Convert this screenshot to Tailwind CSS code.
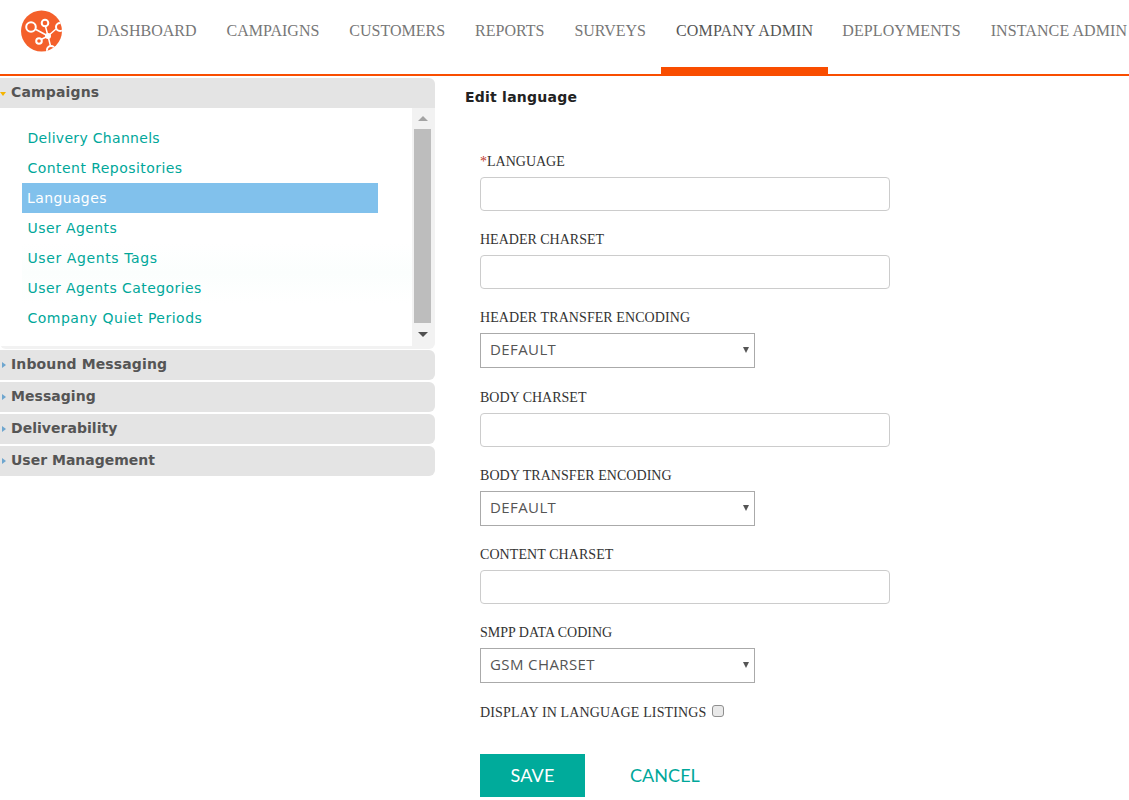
<!DOCTYPE html>
<html><head><meta charset="utf-8"><title>Edit language</title>
<script src="https://cdn.jsdelivr.net/npm/@tailwindcss/browser@4"></script></head>
<body class="bg-white overflow-hidden font-['Liberation_Serif',serif]">
<header class="h-[76px] border-b-2 border-[#f94d00] flex items-start relative">
  <svg class="absolute left-[21px] top-[10px]" width="42" height="42" viewBox="21 10 42 42">
    <defs><clipPath id="c"><circle cx="41.5" cy="31" r="20.5"/></clipPath></defs>
    <circle cx="41.5" cy="31" r="20.5" fill="#f4602b"/>
    <g clip-path="url(#c)" stroke="#fff" fill="none">
      <path d="M35 29 L48 36 M45.5 26.5 L48 36 M41 39.5 L48 36 M56 29 L48 36 M50.500 46 L48 36" stroke-width="1.500"/>
      <circle cx="31" cy="27" r="4.800" stroke-width="2"/>
      <circle cx="45" cy="23" r="3.300" stroke-width="2"/>
      <circle cx="39" cy="41" r="2.800" stroke-width="2"/>
      <circle cx="60" cy="27" r="4" stroke-width="2"/>
      <circle cx="51" cy="50" r="4" stroke-width="2"/>
      <circle cx="48" cy="36" r="3" fill="#fff" stroke="none"/>
    </g>
  </svg>
  <nav class="flex absolute left-[82px] top-0 text-[16px] leading-[20px] text-[#777] whitespace-nowrap">
    <a class="px-[15px] pt-[21px] h-[74px]">DASHBOARD</a>
    <a class="px-[15px] pt-[21px] h-[74px]">CAMPAIGNS</a>
    <a class="px-[15px] pt-[21px] h-[74px]">CUSTOMERS</a>
    <a class="px-[15px] pt-[21px] h-[74px]">REPORTS</a>
    <a class="px-[15px] pt-[21px] h-[74px]">SURVEYS</a>
    <a class="px-[15px] pt-[21px] h-[74px] tracking-[0.154px] text-[#555] border-b-[7px] border-[#f94d00]">COMPANY ADMIN</a>
    <a class="pl-[14px] pr-[15px] pt-[21px] h-[74px] tracking-[0.09px]">DEPLOYMENTS</a>
    <a class="px-[15px] pt-[21px] h-[74px] tracking-[0.1px]">INSTANCE ADMIN</a>
  </nav>
</header>
<div class="flex items-start">
  <aside class="w-[435px] shrink-0 pt-[2px] font-['DejaVu_Sans',sans-serif]">
    <div class="h-[30px] bg-[#e4e4e4] rounded-tr-[6px] flex items-center relative pl-[11px] pb-[1px] text-[14px] font-bold tracking-[0.15px] text-[#555]">
      <span class="absolute left-0 top-[14px] w-0 h-0 border-x-[3.500px] border-x-transparent border-t-[4px] border-t-[#f5b400]"></span>Campaigns
    </div>
    <div class="h-[241px] bg-[#f2f2f2] rounded-b-[6px] pb-[3px] flex">
      <div class="w-[412px] bg-white pt-[15px] pl-[22px] text-[14px] leading-[30px] text-[#00a79a]">
        <div class="pl-[5.500px] tracking-[0.3px]">Delivery Channels</div>
        <div class="pl-[5.500px] tracking-[0.45px]">Content Repositories</div>
        <div class="pl-[5px] w-[356px] bg-[#81c1ec] text-white tracking-[0.38px]">Languages</div>
        <div class="pl-[5.500px] tracking-[0.42px]">User Agents</div>
        <div class="pl-[5.500px] tracking-[0.6px] bg-gradient-to-b from-white to-[#fbfefd]">User Agents Tags</div>
        <div class="pl-[5.500px] tracking-[0.42px] bg-gradient-to-b from-[#fbfefd] to-white">User Agents Categories</div>
        <div class="pl-[5.500px] tracking-[0.5px]">Company Quiet Periods</div>
      </div>
      <div class="w-[23px] flex flex-col items-start pl-[2px]">
        <div class="h-[21px] w-[17px] flex items-center justify-center"><span class="w-0 h-0 border-x-[5px] border-x-transparent border-b-[5px] border-b-[#a3a3a3]"></span></div>
        <div class="h-[194px] w-[17px] bg-[#bdbdbd]"></div>
        <div class="h-[23px] w-[17px] flex items-center justify-center"><span class="w-0 h-0 border-x-[5px] border-x-transparent border-t-[5px] border-t-[#505050]"></span></div>
      </div>
    </div>
    <div class="flex flex-col gap-[2px] mt-[1px] text-[14px] font-bold text-[#555]">
      <div class="h-[30px] bg-[#e4e4e4] rounded-r-[6px] flex items-center relative pl-[11px] pb-[1px] tracking-[0.13px]"><span class="absolute left-[2px] top-[12px] w-0 h-0 border-y-[3.500px] border-y-transparent border-l-[4px] border-l-[#6ea6cf]"></span>Inbound Messaging</div>
      <div class="h-[30px] bg-[#e4e4e4] rounded-r-[6px] flex items-center relative pl-[11px] pb-[1px] tracking-[0.05px]"><span class="absolute left-[2px] top-[12px] w-0 h-0 border-y-[3.500px] border-y-transparent border-l-[4px] border-l-[#6ea6cf]"></span>Messaging</div>
      <div class="h-[30px] bg-[#e4e4e4] rounded-r-[6px] flex items-center relative pl-[11px] pb-[1px] tracking-[0.03px]"><span class="absolute left-[2px] top-[12px] w-0 h-0 border-y-[3.500px] border-y-transparent border-l-[4px] border-l-[#6ea6cf]"></span>Deliverability</div>
      <div class="h-[30px] bg-[#e4e4e4] rounded-r-[6px] flex items-center relative pl-[11px] pb-[1px]"><span class="absolute left-[2px] top-[12px] w-0 h-0 border-y-[3.500px] border-y-transparent border-l-[4px] border-l-[#6ea6cf]"></span>User Management</div>
    </div>
  </aside>
  <main class="flex-1 pl-[30px]">
    <h1 class="font-['DejaVu_Sans',sans-serif] font-bold text-[14px] leading-[20px] tracking-[0.23px] text-[#222] mt-[11px] mb-[47px]">Edit language</h1>
    <form class="pl-[15px] text-[14px] text-[#333]">
      <label class="block leading-[16px] mb-[7px]"><span class="text-[#c0392b]">*</span>LANGUAGE</label>
      <input class="block w-[410px] h-[34px] border border-[#ccc] rounded-[4px] mb-[21px]">
      <label class="block leading-[16px] mb-[7px]">HEADER CHARSET</label>
      <input class="block w-[410px] h-[34px] border border-[#ccc] rounded-[4px] mb-[21px]">
      <label class="block leading-[16px] mb-[7px] tracking-[0.08px]">HEADER TRANSFER ENCODING</label>
      <div class="relative w-[275px] mb-[22px]">
        <select class="appearance-none block w-full h-[35px] pb-[2px] border border-[#aaa] bg-white pl-[9px] font-['Open_Sans',sans-serif] text-[15px] tracking-[0.4px] text-[#555]"><option>DEFAULT</option></select>
        <span class="absolute right-[6px] top-[14px] w-0 h-0 border-x-[3px] border-x-transparent border-t-[6px] border-t-[#555]"></span>
      </div>
      <label class="block leading-[16px] mb-[7px]">BODY CHARSET</label>
      <input class="block w-[410px] h-[34px] border border-[#ccc] rounded-[4px] mb-[21px]">
      <label class="block leading-[16px] mb-[7px] tracking-[0.05px]">BODY TRANSFER ENCODING</label>
      <div class="relative w-[275px] mb-[21px]">
        <select class="appearance-none block w-full h-[35px] pb-[3px] border border-[#aaa] bg-white pl-[9px] font-['Open_Sans',sans-serif] text-[15px] tracking-[0.4px] text-[#555]"><option>DEFAULT</option></select>
        <span class="absolute right-[6px] top-[14px] w-0 h-0 border-x-[3px] border-x-transparent border-t-[6px] border-t-[#555]"></span>
      </div>
      <label class="block leading-[16px] mb-[7px] tracking-[0.07px]">CONTENT CHARSET</label>
      <input class="block w-[410px] h-[34px] border border-[#ccc] rounded-[4px] mb-[21px]">
      <label class="block leading-[16px] mb-[7px]">SMPP DATA CODING</label>
      <div class="relative w-[275px] mb-[22px]">
        <select class="appearance-none block w-full h-[35px] pb-[2px] border border-[#aaa] bg-white pl-[9px] font-['Open_Sans',sans-serif] text-[15px] tracking-[0.4px] text-[#555]"><option>GSM CHARSET</option></select>
        <span class="absolute right-[6px] top-[14px] w-0 h-0 border-x-[3px] border-x-transparent border-t-[6px] border-t-[#555]"></span>
      </div>
      <label class="flex items-center gap-[5px] leading-[16px] mb-[33px] tracking-[0.14px]">DISPLAY IN LANGUAGE LISTINGS <input type="checkbox" class="appearance-none w-[12px] h-[12px] -mt-[4px] bg-[#e9e9e9] border border-[#8f8f8f] rounded-[3px]"></label>
      <div class="flex items-center font-['Lato',sans-serif] text-[18px]">
        <button type="button" class="w-[105px] h-[43px] bg-[#00ab9b] text-white tracking-[0.2px]">SAVE</button>
        <a class="ml-[45px] text-[#00a79a] tracking-[0.05px]">CANCEL</a>
      </div>
    </form>
  </main>
</div>
</body></html>
